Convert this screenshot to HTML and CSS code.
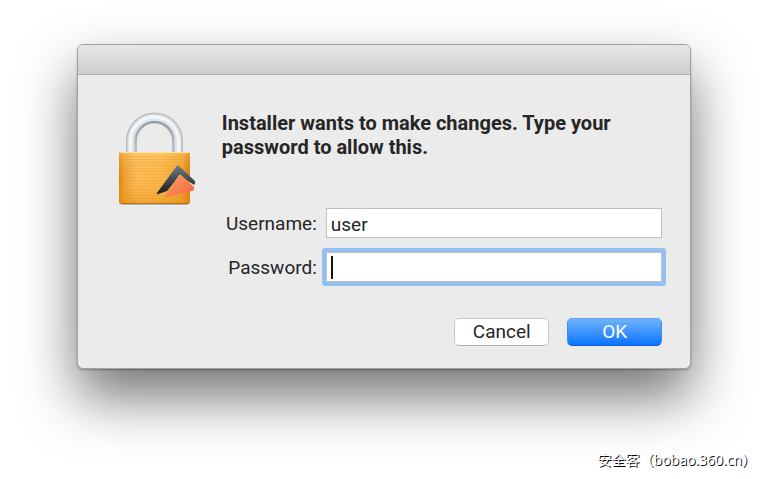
FILE: index.html
```html
<!DOCTYPE html>
<html lang="en">
<head>
    <meta charset="UTF-8">
    <meta name="viewport" content="width=device-width, initial-scale=1.0">
    <title>Installer</title>
    <link rel="stylesheet" href="styles.css">
</head>
<body>
    <main class="dialog">
        <div class="titlebar"></div>
        <form class="content">
            <svg class="lock" width="80" height="98" viewBox="0 0 80 98" aria-hidden="true">
                <defs>
                    <linearGradient id="brass" x1="0" y1="0" x2="1" y2="0">
                        <stop offset="0" stop-color="#d9860f"/>
                        <stop offset=".07" stop-color="#f0a030"/>
                        <stop offset=".25" stop-color="#fcbd59"/>
                        <stop offset=".6" stop-color="#fbb84e"/>
                        <stop offset=".88" stop-color="#f3a431"/>
                        <stop offset="1" stop-color="#d47f0b"/>
                    </linearGradient>
                    <linearGradient id="shade" x1="0" y1="0" x2="0" y2="1">
                        <stop offset="0" stop-color="#ffe09a" stop-opacity=".35"/>
                        <stop offset=".5" stop-color="#f4a52f" stop-opacity="0"/>
                        <stop offset="1" stop-color="#e38b13" stop-opacity=".5"/>
                    </linearGradient>
                    <linearGradient id="dark" x1="0" y1="0" x2="0" y2="1">
                        <stop offset="0" stop-color="#6f7b84"/>
                        <stop offset="1" stop-color="#15181b"/>
                    </linearGradient>
                    <linearGradient id="flame" x1="0" y1="0" x2="1" y2="1">
                        <stop offset="0" stop-color="#f5a868"/>
                        <stop offset="1" stop-color="#f85f3c"/>
                    </linearGradient>
                    <linearGradient id="inner" x1="0" y1="0" x2="0" y2="1">
                        <stop offset="0" stop-color="#929aa3"/>
                        <stop offset="1" stop-color="#c3cad1"/>
                    </linearGradient>
                    <pattern id="brushed" width="70" height="3" patternUnits="userSpaceOnUse">
                        <rect width="70" height="1" fill="#d98612" opacity=".2"/>
                    </pattern>
                </defs>
                <!-- shackle -->
                <g fill="none">
                    <path d="M13.500 43V30a23 23 0 0 1 46 0v13" stroke="#b4bac2" stroke-width="11"/>
                    <path d="M13.500 43V30a23 23 0 0 1 46 0v13" stroke="#cdd3da" stroke-width="9"/>
                    <path d="M17.500 43V30a19 19 0 0 1 38 0v13" stroke="url(#inner)" stroke-width="2"/>
                    <path d="M13 43V30a23.500 23.500 0 0 1 47 0v13" stroke="#dfe4e9" stroke-width="6"/>
                    <path d="M12.500 43V30a24 24 0 0 1 48 0v13" stroke="#f3f6f9" stroke-width="3"/>
                </g>
                <!-- body -->
                <rect x="2" y="43" width="69" height="51" rx="3" fill="#777" opacity=".5"/>
                <rect x="1" y="41" width="71" height="52" rx="2" fill="url(#brass)"/>
                <rect x="1" y="41" width="71" height="52" rx="2" fill="url(#shade)"/>
                <rect x="1" y="43" width="71" height="48" fill="url(#brushed)"/>
                <path d="M2 41.500h69" stroke="#ffe39e"/>
                <path d="M3 92.500h67" stroke="#b77312"/>
                <!-- badge -->
                <path d="M39 82L58 56q2-3 4 0l15 14q1 2-1 4L62 64 49 80l-9 3q-2 1-1-1z" fill="url(#dark)"/>
                <path d="M47 85L61 64q1-1 2 0l13 12q1 3-2 4L48 86q-2 0-1-1z" fill="url(#flame)"/>
            </svg>
            <div class="panel">
                <h1>Installer wants to make changes. Type your password to allow this.</h1>
                <div class="fields">
                    <label for="username">Username:</label>
                    <input type="text" id="username" value="user">
                    <label for="password">Password:</label>
                    <input type="password" id="password" class="active">
                </div>
                <div class="buttons">
                    <button type="button">Cancel</button>
                    <button type="submit" class="primary">OK</button>
                </div>
            </div>
        </form>
    </main>
    <footer class="credit" lang="zh-CN">安全客（bobao.360.cn）</footer>
</body>
</html>
```

FILE: styles.css
```css
* {
    box-sizing: border-box;
}
body {
    margin: 0;
    padding-top: 44px;
    background: #fff;
    color: #262626;
    font-family: Roboto, "Liberation Sans", sans-serif;
    font-size: 19px;
}
.dialog {
    width: 80%;
    min-width: 560px;
    margin: 0 auto;
    background: #ebebeb;
    border: 1px solid #a3a3a3;
    border-radius: 6px;
    box-shadow: 0 28px 56px rgba(0, 0, 0, 0.55), 0 1px 2px rgba(0, 0, 0, 0.3);
}
.titlebar {
    height: 30px;
    background: linear-gradient(#e6e6e6, #cdcdcd);
    border-bottom: 1px solid #b3b3b3;
    border-radius: 5px 5px 0 0;
}
.content {
    display: flex;
    gap: 24px;
    padding: 36px 28px 22px 40px;
}
.lock {
    flex: none;
}
.panel {
    flex: 1;
}
h1 {
    margin: 0 0 49px;
    font-size: 20px;
    line-height: 24px;
    font-weight: 700;
}
.fields {
    display: grid;
    grid-template-columns: 95px 1fr;
    gap: 14px 9px;
    align-items: center;
}
label {
    text-align: right;
}
input {
    width: 100%;
    height: 30px;
    padding: 2px 4px 0;
    border: 1px solid #c0c0c0;
    border-radius: 0;
    background: #fff;
    color: inherit;
    font: inherit;
    outline: none;
}
.active {
    box-shadow: 0 0 0 4px #94bff3;
    border-radius: 1px;
    /* text cursor */
    background: linear-gradient(#111, #111) 4px 3px / 2px 23px no-repeat #fff;
}
.buttons {
    display: flex;
    justify-content: flex-end;
    gap: 18px;
    margin-top: 36px;
}
button {
    width: 95px;
    height: 28px;
    padding: 0;
    border: 1px solid #c8c8c8;
    border-bottom-color: #b0b0b0;
    border-radius: 5px;
    background: #fff;
    color: inherit;
    font: inherit;
    line-height: 26px;
}
.primary {
    border-color: #5aa3f5 #3c8ff5 #0a5fe8;
    background: linear-gradient(#6fb3fa, #0d74ff);
    color: #fff;
}
.credit {
    margin-top: 81px;
    padding-right: 12px;
    text-align: right;
    font-family: "Open Sans", "Noto Sans CJK SC", sans-serif;
    font-size: 14px;
    line-height: 20px;
    color: #fff;
    text-shadow: 1px 1px 0 #000;
}
```
